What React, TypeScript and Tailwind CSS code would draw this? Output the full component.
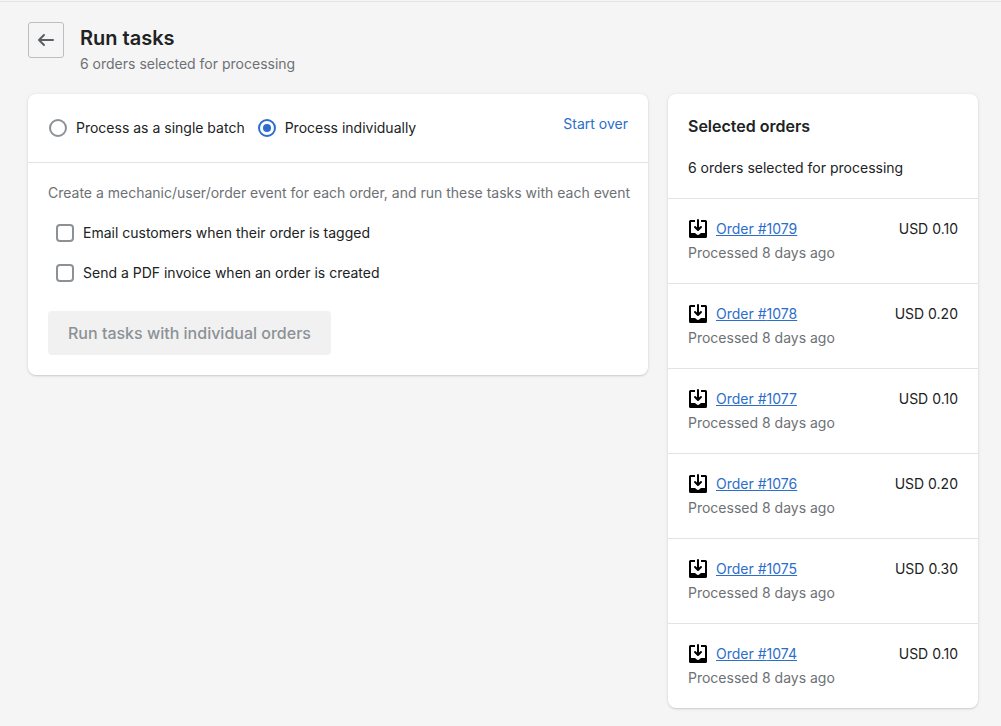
import { useState } from "react";
import type { ReactNode } from "react";

const orders = [
  { id: 1079, total: "USD 0.10" },
  { id: 1078, total: "USD 0.20" },
  { id: 1077, total: "USD 0.10" },
  { id: 1076, total: "USD 0.20" },
  { id: 1075, total: "USD 0.30" },
  { id: 1074, total: "USD 0.10" },
];

const tasks = [
  "Email customers when their order is tagged",
  "Send a PDF invoice when an order is created",
];

const modes = [
  { value: "batch", label: "Process as a single batch" },
  { value: "individual", label: "Process individually" },
];

function ArrowLeftIcon() {
  return (
    <svg viewBox="0 0 20 20" className="size-5" fill="#5c5f62" aria-hidden="true">
      <path d="M17 9H5.414l3.293-3.293a.999.999 0 1 0-1.414-1.414l-5 5a.999.999 0 0 0 0 1.414l5 5a.997.997 0 0 0 1.414 0 .999.999 0 0 0 0-1.414L5.414 11H17a1 1 0 1 0 0-2z" />
    </svg>
  );
}

function OrderIcon() {
  return (
    <svg viewBox="0 0 20 20" className="size-5 shrink-0" fill="#000" aria-hidden="true">
      <path d="M11 1a1 1 0 1 0-2 0v7.586L7.707 7.293a1 1 0 0 0-1.414 1.414l3 3a1 1 0 0 0 1.414 0l3-3a1 1 0 0 0-1.414-1.414L11 8.586V1z" />
      <path d="M3 14V3h4V1H2.5A1.5 1.5 0 0 0 1 2.5v15A1.5 1.5 0 0 0 2.5 19h15a1.5 1.5 0 0 0 1.5-1.5v-15A1.5 1.5 0 0 0 17.5 1H13v2h4v11h-3.5c-.775 0-1.388.662-1.926 1.244l-.11.12A1.994 1.994 0 0 1 10 16a1.994 1.994 0 0 1-1.463-.637l-.111-.12C7.888 14.664 7.275 14 6.5 14H3z" />
    </svg>
  );
}

function Card({ children }: { children: ReactNode }) {
  return (
    <section className="rounded-lg bg-white shadow-[0_0_5px_rgba(23,24,24,0.05),0_1px_2px_rgba(0,0,0,0.15)]">
      {children}
    </section>
  );
}

export default function App() {
  const [mode, setMode] = useState("individual");
  const [selected, setSelected] = useState<string[]>([]);

  const toggle = (task: string) =>
    setSelected((list) =>
      list.includes(task) ? list.filter((t) => t !== task) : [...list, task],
    );

  return (
    <div className="min-h-screen bg-[#f5f5f5] pt-px font-['Inter',sans-serif] text-sm leading-5 text-[#202223]">
      <div className="border-t border-[#e1e3e5] pt-5 pr-[23px] pb-4 pl-7">
        <header className="flex items-start gap-4">
          <button
            type="button"
            aria-label="Back"
            className="flex size-9 items-center justify-center rounded-[3px] border border-[#babfc3]"
          >
            <ArrowLeftIcon />
          </button>
          <div className="pt-0.5">
            <h1 className="text-xl leading-7 font-semibold">Run tasks</h1>
            <p className="pt-0.5 text-[#6d7175]">6 orders selected for processing</p>
          </div>
        </header>

        <main className="mt-5 grid grid-cols-[2fr_1fr] items-start gap-5">
          <Card>
            <div className="flex items-start justify-between border-b border-[#e1e3e5] p-5">
              <div className="flex gap-3">
                {modes.map(({ value, label }) => (
                  <label key={value} className="flex items-center gap-[9px] py-1 pl-px">
                    <input
                      type="radio"
                      name="mode"
                      value={value}
                      checked={mode === value}
                      onChange={() => setMode(value)}
                      className="grid size-[18px] shrink-0 appearance-none place-items-center rounded-full border-2 border-[#8c9196] bg-white before:size-2 before:rounded-full checked:border-[#2c6ecb] checked:before:bg-[#2c6ecb]"
                    />
                    {label}
                  </label>
                ))}
              </div>
              <button type="button" className="text-[#2c6ecb]">
                Start over
              </button>
            </div>
            <div className="py-5 pr-3 pl-5">
              <p className="text-[#6d7175]">
                Create a mechanic/user/order event for each order, and run these tasks with each event
              </p>
              <div className="px-2 pt-2.5">
                {tasks.map((task) => (
                  <label key={task} className="flex h-10 items-center gap-[9px]">
                    <input
                      type="checkbox"
                      checked={selected.includes(task)}
                      onChange={() => toggle(task)}
                      className="size-[18px] shrink-0 appearance-none rounded border-2 border-[#8c9196] bg-white checked:border-[#2c6ecb] checked:bg-[#2c6ecb]"
                    />
                    {task}
                  </label>
                ))}
              </div>
              <button
                type="button"
                disabled={selected.length === 0}
                className="mt-[18px] h-11 rounded bg-[#2c6ecb] px-5 text-base font-medium text-white disabled:bg-[#f1f1f1] disabled:text-[#8c9196]"
              >
                Run tasks with individual orders
              </button>
            </div>
          </Card>

          <Card>
            <div className="p-5">
              <h2 className="text-base leading-6 font-semibold">Selected orders</h2>
              <p className="pt-5">6 orders selected for processing</p>
            </div>
            <ul>
              {orders.map(({ id, total }) => (
                <li key={id} className="border-t border-[#e1e3e5] p-5">
                  <div className="flex items-center gap-2">
                    <OrderIcon />
                    <a href={`#order-${id}`} className="text-[#2c6ecb] underline">
                      Order #{id}
                    </a>
                    <span className="ml-auto">{total}</span>
                  </div>
                  <p className="pt-1 text-[#6d7175]">Processed 8 days ago</p>
                </li>
              ))}
            </ul>
          </Card>
        </main>
      </div>
    </div>
  );
}
